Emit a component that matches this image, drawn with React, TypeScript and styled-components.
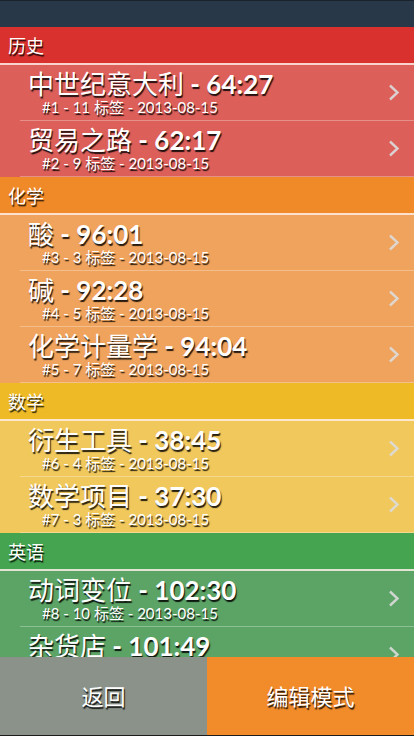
import React from 'react'
import styled, { createGlobalStyle } from 'styled-components'

const GlobalStyle = createGlobalStyle`
  html, body {
    margin: 0;
    padding: 0;
    background: #1c1c1c;
  }
  * {
    box-sizing: border-box;
  }
`

interface Palette {
  header: string
  item: string
}

interface Entry {
  name: string
  time: string
  num: number
  tags: number
  date: string
}

interface Section {
  title: string
  palette: Palette
  entries: Entry[]
}

const sections: Section[] = [
  {
    title: '历史',
    palette: { header: '#d9322e', item: '#dc5f5a' },
    entries: [
      { name: '中世纪意大利', time: '64:27', num: 1, tags: 11, date: '2013-08-15' },
      { name: '贸易之路', time: '62:17', num: 2, tags: 9, date: '2013-08-15' }
    ]
  },
  {
    title: '化学',
    palette: { header: '#f08a28', item: '#f0a35c' },
    entries: [
      { name: '酸', time: '96:01', num: 3, tags: 3, date: '2013-08-15' },
      { name: '碱', time: '92:28', num: 4, tags: 5, date: '2013-08-15' },
      { name: '化学计量学', time: '94:04', num: 5, tags: 7, date: '2013-08-15' }
    ]
  },
  {
    title: '数学',
    palette: { header: '#eebb27', item: '#f0c85c' },
    entries: [
      { name: '衍生工具', time: '38:45', num: 6, tags: 4, date: '2013-08-15' },
      { name: '数学项目', time: '37:30', num: 7, tags: 3, date: '2013-08-15' }
    ]
  },
  {
    title: '英语',
    palette: { header: '#44a44f', item: '#5ca466' },
    entries: [
      { name: '动词变位', time: '102:30', num: 8, tags: 10, date: '2013-08-15' },
      { name: '杂货店', time: '101:49', num: 9, tags: 6, date: '2013-08-15' }
    ]
  }
]

const font = `'Lato', 'Noto Sans CJK SC', sans-serif`
const shadow = `1px 1.5px 1px rgba(0, 0, 0, 0.85)`

const Screen = styled.div`
  width: 414px;
  height: 736px;
  display: flex;
  flex-direction: column;
  overflow: hidden;
  font-family: ${font};
  color: #fff;
`

const TopBar = styled.div`
  height: 27px;
  flex-shrink: 0;
  background: #283849;
  border-top: 1px solid #1a222c;
`

const List = styled.div`
  flex: 1;
  overflow: hidden;
`

const SectionHeader = styled.div<{ $bg: string }>`
  height: 38px;
  display: flex;
  align-items: center;
  padding: 0 8px 1px;
  background: ${p => p.$bg};
  border-bottom: 2px solid rgba(255, 240, 235, 0.85);
  font-size: 18px;
  text-shadow: ${shadow};
`

const Rows = styled.div<{ $bg: string }>`
  background: ${p => p.$bg};
`

const Row = styled.div`
  height: 56px;
  display: flex;
  align-items: center;
  margin-left: 20px;
  padding-right: 14px;
  border-bottom: 1px solid rgba(255, 255, 255, 0.3);
`

const RowText = styled.div`
  flex: 1;
  display: flex;
  flex-direction: column;
  padding-left: 8px;
  padding-bottom: 1px;
  text-shadow: ${shadow};
`

const Title = styled.div`
  font-size: 26px;
  font-weight: 700;
  line-height: 29px;
  white-space: nowrap;
`

const Name = styled.span`
  font-weight: 400;
`

const Meta = styled.div`
  font-size: 15px;
  font-weight: 400;
  line-height: 16px;
  padding-left: 14px;
  white-space: nowrap;
`

const Chevron = styled.svg`
  width: 12px;
  height: 17px;
  flex-shrink: 0;
`

const BottomBar = styled.div`
  height: 79px;
  flex-shrink: 0;
  display: grid;
  grid-template-columns: 207px 1fr;
  border-bottom: 1px solid #1c1c1c;
`

const BarButton = styled.div<{ $bg: string }>`
  display: flex;
  align-items: center;
  justify-content: center;
  padding-bottom: 2px;
  background: ${p => p.$bg};
  font-size: 22px;
  text-shadow: ${shadow};
`

function ChevronIcon() {
  return (
    <Chevron viewBox="0 0 12 17">
      <path
        d="M2 1.5 L9.5 8.5 L2 15.5"
        fill="none"
        stroke="rgba(220, 220, 220, 0.9)"
        strokeWidth="2.4"
      />
    </Chevron>
  )
}

export default function App() {
  return (
    <>
      <GlobalStyle />
      <Screen>
        <TopBar />
        <List>
          {sections.map(section => (
            <div key={section.title}>
              <SectionHeader $bg={section.palette.header}>
                {section.title}
              </SectionHeader>
              <Rows $bg={section.palette.item}>
                {section.entries.map(e => (
                  <Row key={e.num}>
                    <RowText>
                      <Title>
                        <Name>{e.name}</Name> - {e.time}
                      </Title>
                      <Meta>
                        #{e.num} - {e.tags} 标签 - {e.date}
                      </Meta>
                    </RowText>
                    <ChevronIcon />
                  </Row>
                ))}
              </Rows>
            </div>
          ))}
        </List>
        <BottomBar>
          <BarButton $bg="#8a9289">返回</BarButton>
          <BarButton $bg="#f28b2a">编辑模式</BarButton>
        </BottomBar>
      </Screen>
    </>
  )
}
